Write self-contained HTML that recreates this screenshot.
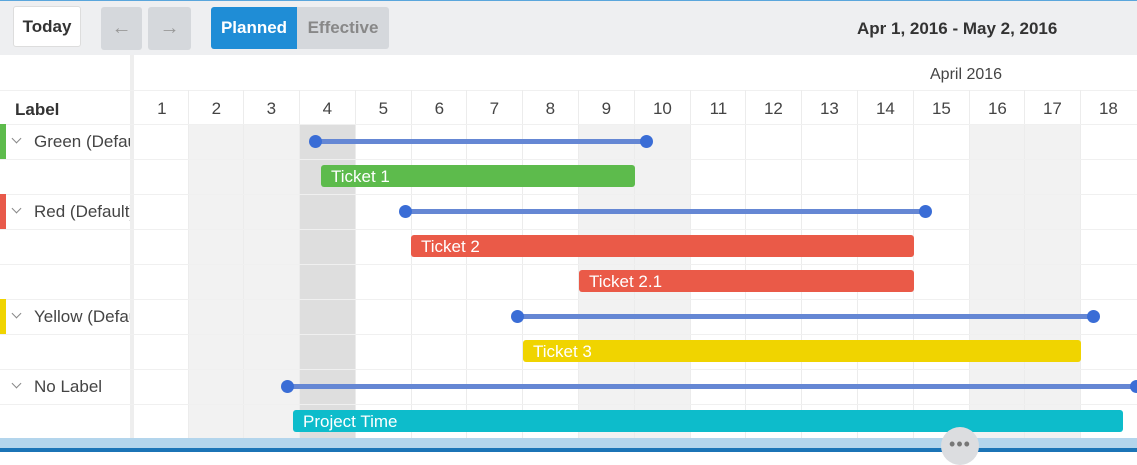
<!DOCTYPE html>
<html><head><style>
*{margin:0;padding:0;box-sizing:border-box}
body{width:1137px;height:452px;overflow:hidden;position:relative;background:#fff;font-family:"Liberation Sans",sans-serif;color:#444}
.a{position:absolute}
.btn{position:absolute;border-radius:3px;display:flex;align-items:center;justify-content:center;font-weight:bold;font-size:17px}
.day{position:absolute;top:90px;height:34px;width:55.8px;text-align:center;line-height:38px;font-size:17px;color:#444;border-left:1px solid #ececec}
.vl{position:absolute;top:124px;height:315px;width:1px;background:#ececec}
.hl{position:absolute;left:0;width:1137px;height:1px;background:#f0f0f0}
.line{position:absolute;height:5px;background:#6587d4}
.dot{position:absolute;width:13px;height:13px;border-radius:50%;background:#3a6dd6}
.bar{position:absolute;height:22px;border-radius:3px;color:#fff;font-size:17px;line-height:23px;padding-left:10px}
.lab{position:absolute;left:34px;font-size:17px;color:#444;width:96px;overflow:hidden;white-space:nowrap}
.chev{position:absolute;left:13px;width:7px;height:7px;border-right:1.3px solid #888;border-bottom:1.3px solid #888;transform:rotate(45deg)}
.mk{position:absolute;left:0;width:6px;height:35px}
</style></head><body>
<div class="a" style="left:0;top:0;width:1137px;height:55px;background:#eeeff1;border-top:1px solid #5aa6dc"></div>
<div class="btn" style="left:13px;top:6px;width:68px;height:41px;background:#fff;border:1px solid #ddd;color:#333">Today</div>
<div class="btn" style="left:101px;top:7px;width:41px;height:43px;background:#d5d8dc;color:#999;font-size:20px;font-weight:normal">&#8592;</div>
<div class="btn" style="left:148px;top:7px;width:43px;height:43px;background:#d5d8dc;color:#999;font-size:20px;font-weight:normal">&#8594;</div>
<div class="btn" style="left:211px;top:7px;width:86px;height:42px;background:#1f8dd6;color:#fff;border-radius:3px 0 0 3px">Planned</div>
<div class="btn" style="left:297px;top:7px;width:92px;height:42px;background:#d5d8dc;color:#888;border-radius:0 3px 3px 0">Effective</div>
<div class="a" style="left:857px;top:19px;font-size:17px;font-weight:bold;color:#333">Apr 1, 2016 - May 2, 2016</div>

<div class="a" style="left:130px;top:55px;width:4px;height:384px;background:#eee"></div>
<div class="hl" style="top:90px"></div>
<div class="a" style="left:930px;top:66px;font-size:16px;color:#444">April 2016</div>
<div class="a" style="left:15px;top:100px;font-size:17px;font-weight:bold;color:#333">Label</div>

<div class="a" style="left:188px;top:124px;width:111px;height:315px;background:#f2f2f2"></div>
<div class="a" style="left:299px;top:124px;width:56px;height:315px;background:#dedede"></div>
<div class="a" style="left:578px;top:124px;width:112px;height:315px;background:#f2f2f2"></div>
<div class="a" style="left:969px;top:124px;width:111px;height:315px;background:#f2f2f2"></div>

<div class="day" style="left:134px;border-left:none">1</div>
<div class="day" style="left:188px">2</div>
<div class="day" style="left:243px">3</div>
<div class="day" style="left:299px">4</div>
<div class="day" style="left:355px">5</div>
<div class="day" style="left:411px">6</div>
<div class="day" style="left:466px">7</div>
<div class="day" style="left:522px">8</div>
<div class="day" style="left:578px">9</div>
<div class="day" style="left:634px">10</div>
<div class="day" style="left:690px">11</div>
<div class="day" style="left:745px">12</div>
<div class="day" style="left:801px">13</div>
<div class="day" style="left:857px">14</div>
<div class="day" style="left:913px">15</div>
<div class="day" style="left:969px">16</div>
<div class="day" style="left:1024px">17</div>
<div class="day" style="left:1080px">18</div>

<div class="vl" style="left:188px"></div><div class="vl" style="left:243px"></div><div class="vl" style="left:299px"></div><div class="vl" style="left:355px"></div><div class="vl" style="left:411px"></div><div class="vl" style="left:466px"></div><div class="vl" style="left:522px"></div><div class="vl" style="left:578px"></div><div class="vl" style="left:634px"></div><div class="vl" style="left:690px"></div><div class="vl" style="left:745px"></div><div class="vl" style="left:801px"></div><div class="vl" style="left:857px"></div><div class="vl" style="left:913px"></div><div class="vl" style="left:969px"></div><div class="vl" style="left:1024px"></div><div class="vl" style="left:1080px"></div>

<div class="hl" style="top:124px"></div><div class="hl" style="top:159px"></div><div class="hl" style="top:194px"></div><div class="hl" style="top:229px"></div><div class="hl" style="top:264px"></div><div class="hl" style="top:299px"></div><div class="hl" style="top:334px"></div><div class="hl" style="top:369px"></div><div class="hl" style="top:404px"></div>

<div class="mk" style="top:124px;background:#5dbb4c"></div>
<div class="chev" style="top:135px"></div><div class="lab" style="top:132px">Green (Default)</div>
<div class="mk" style="top:194px;background:#e8594a"></div>
<div class="chev" style="top:205px"></div><div class="lab" style="top:202px">Red (Default)</div>
<div class="mk" style="top:299px;background:#f0d400"></div>
<div class="chev" style="top:310px"></div><div class="lab" style="top:307px">Yellow (Default)</div>
<div class="chev" style="top:380px"></div><div class="lab" style="top:377px">No Label</div>

<div class="line" style="left:315px;width:331px;top:139px"></div><div class="dot" style="left:309px;top:135px"></div><div class="dot" style="left:640px;top:135px"></div>
<div class="bar" style="left:321px;width:314px;top:165px;background:#5dbb4c">Ticket 1</div>
<div class="line" style="left:405px;width:520px;top:209px"></div><div class="dot" style="left:399px;top:205px"></div><div class="dot" style="left:919px;top:205px"></div>
<div class="bar" style="left:411px;width:503px;top:235px;background:#ea5a48">Ticket 2</div>
<div class="bar" style="left:579px;width:335px;top:270px;background:#ea5a48">Ticket 2.1</div>
<div class="line" style="left:517px;width:576px;top:314px"></div><div class="dot" style="left:511px;top:310px"></div><div class="dot" style="left:1087px;top:310px"></div>
<div class="bar" style="left:523px;width:558px;top:340px;background:#f0d400">Ticket 3</div>
<div class="line" style="left:287px;width:850px;top:384px"></div><div class="dot" style="left:281px;top:380px"></div><div class="dot" style="left:1130px;top:380px"></div>
<div class="bar" style="left:293px;width:830px;top:410px;background:#0dbccb">Project Time</div>

<div class="a" style="left:0;top:438px;width:1137px;height:10px;background:#b3d5ec"></div>
<div class="a" style="left:0;top:448px;width:1137px;height:4px;background:#1b74b6"></div>
<div class="a" style="left:941px;top:427px;width:38px;height:38px;border-radius:50%;background:#dcdde0;text-align:center;font-size:18px;line-height:34px;color:#777;letter-spacing:1px">&#8226;&#8226;&#8226;</div>
</body></html>
